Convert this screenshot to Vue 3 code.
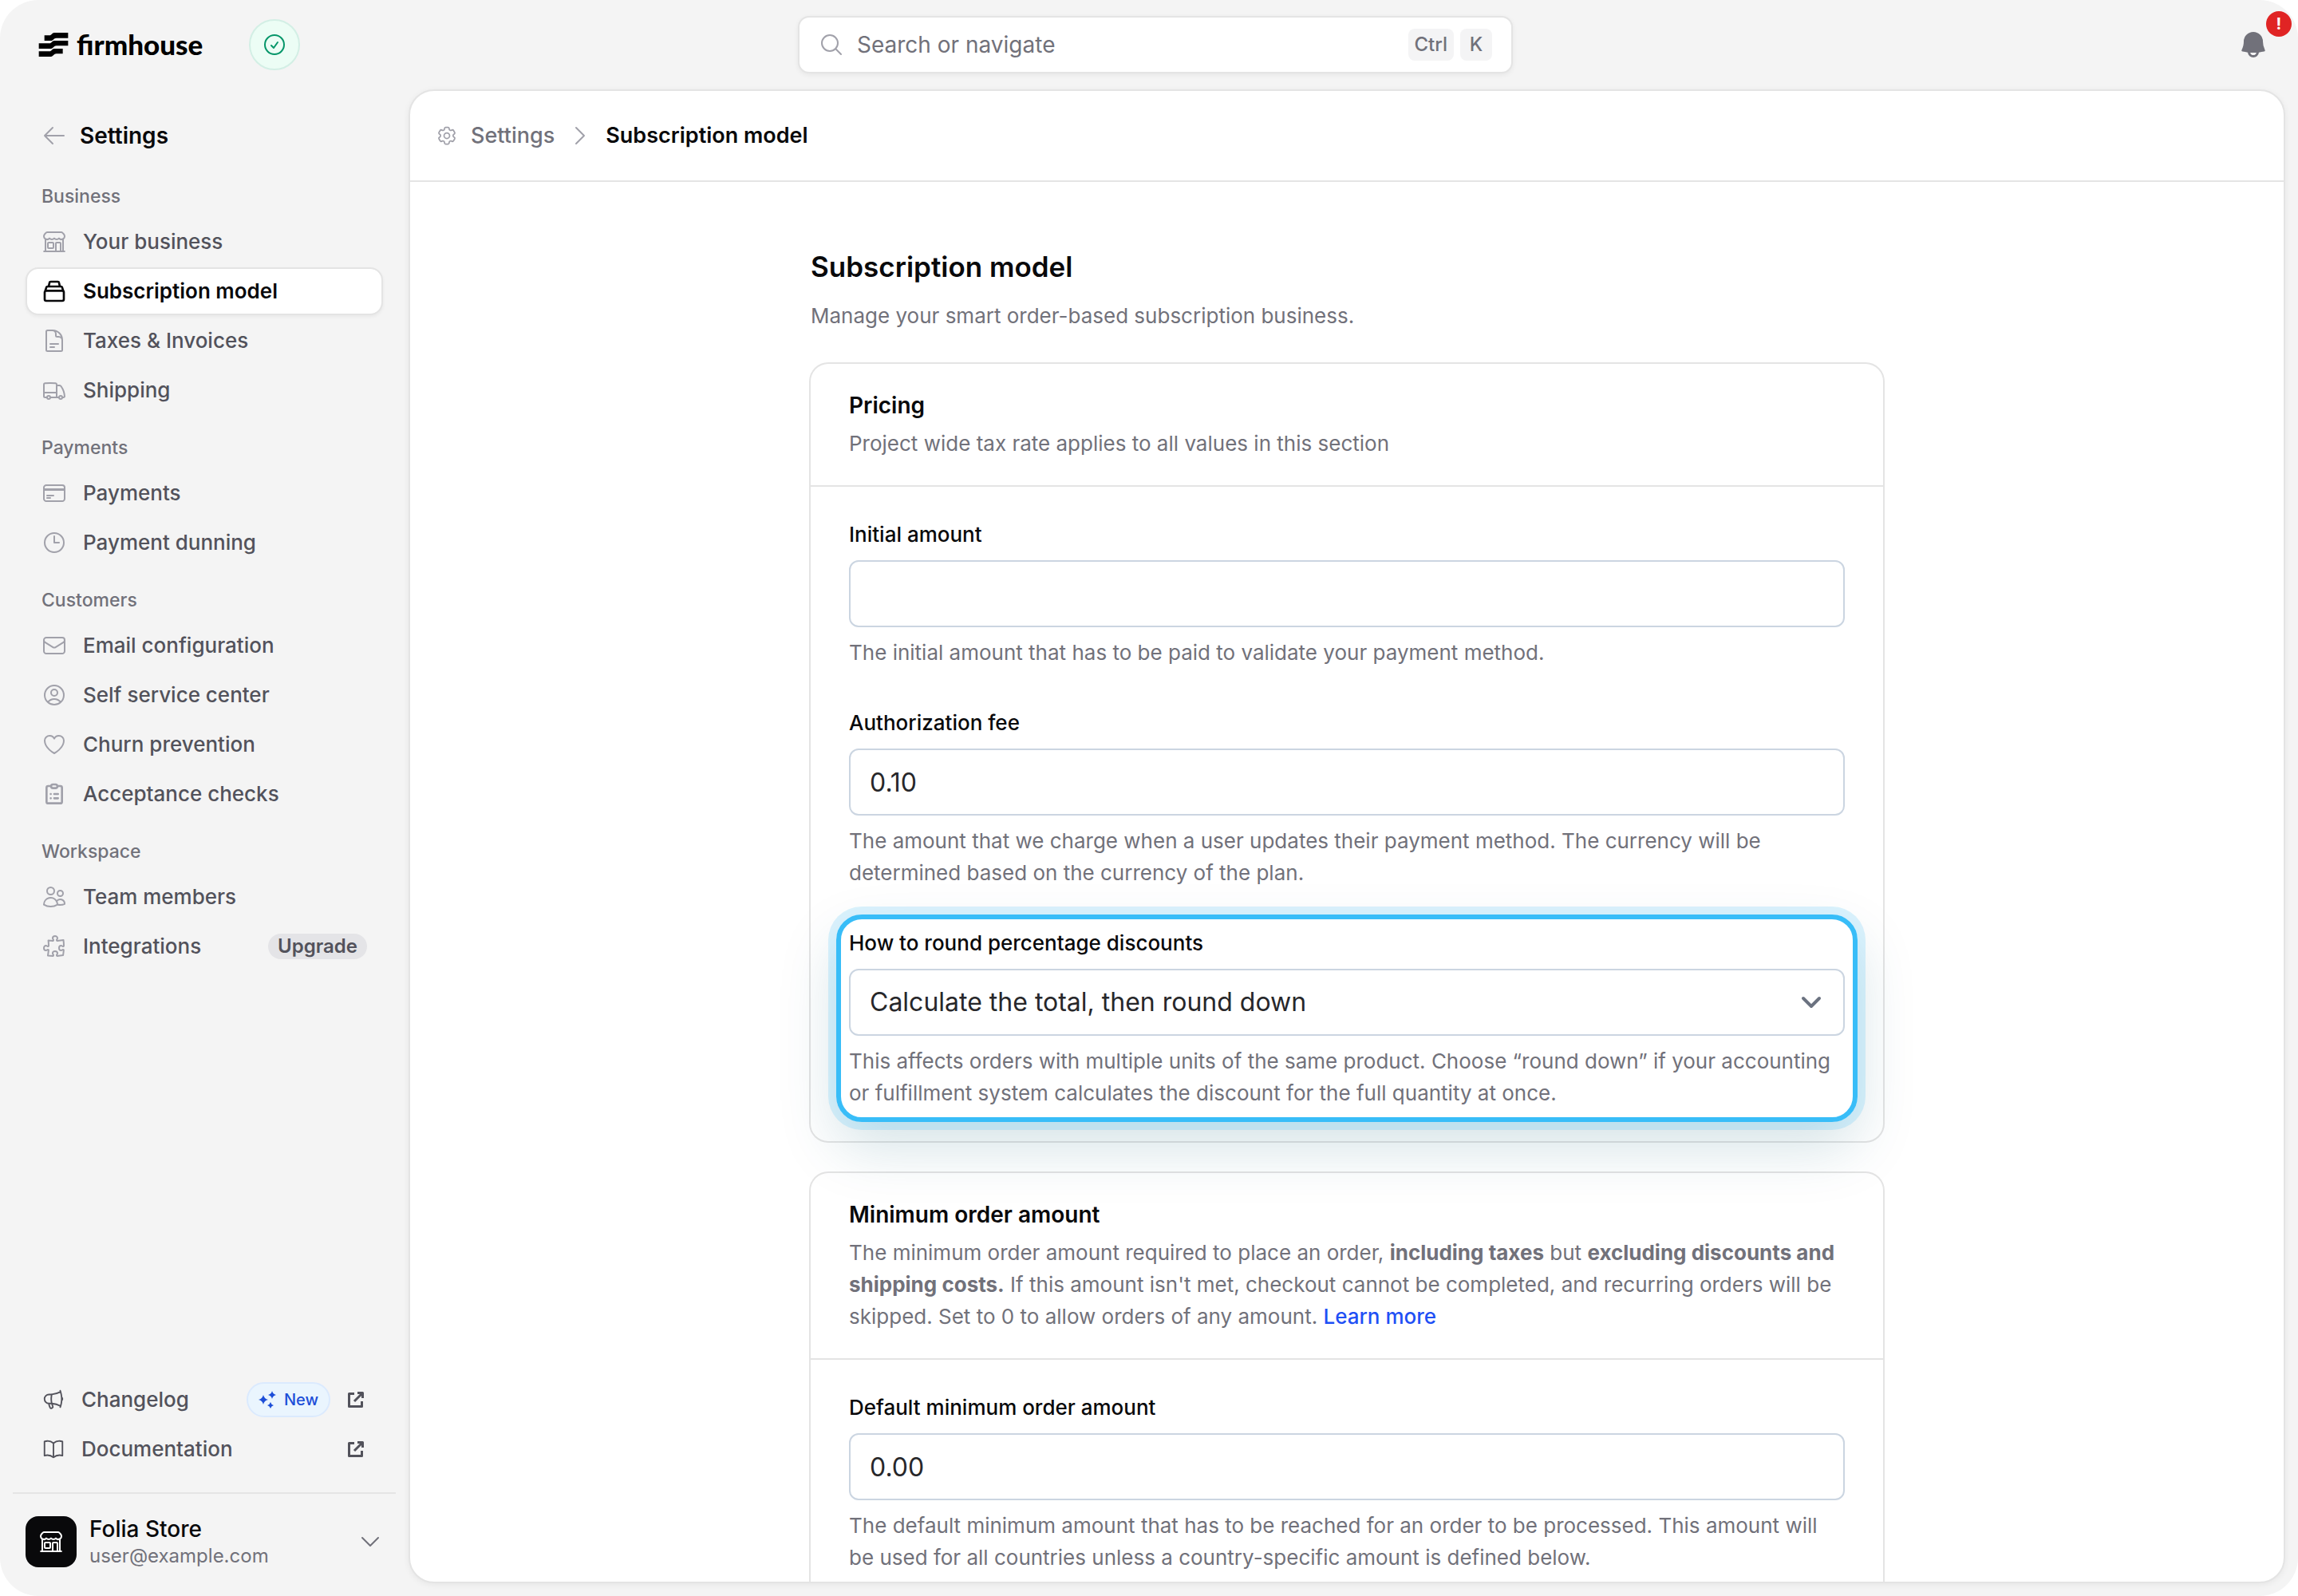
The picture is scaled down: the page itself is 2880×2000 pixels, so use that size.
<script setup>
import { h, ref } from 'vue';

// Outline icons, all drawn on a 24x24 grid
const icons = {
  store: 'M13.5 21v-7.5a.75.75 0 0 1 .75-.75h3a.75.75 0 0 1 .75.75V21m-4.5 0H2.36m11.14 0H18m0 0h3.64m-1.39 0V9.349M3.75 21V9.349m0 0a3.001 3.001 0 0 0 3.75-.615A2.993 2.993 0 0 0 9.75 9.75c.896 0 1.7-.393 2.25-1.016a2.993 2.993 0 0 0 2.25 1.016c.896 0 1.7-.393 2.25-1.015a3.001 3.001 0 0 0 3.75.614m-16.5 0a3.004 3.004 0 0 1-.621-4.72l1.189-1.19A1.5 1.5 0 0 1 5.378 3h13.243a1.5 1.5 0 0 1 1.06.44l1.19 1.189a3 3 0 0 1-.621 4.72M6.75 18h3.75a.75.75 0 0 0 .75-.75V13.5a.75.75 0 0 0-.75-.75H6.75a.75.75 0 0 0-.75.75v3.75c0 .414.336.75.75.75Z',
  stack: 'M4.5 11.5h15a1.5 1.5 0 0 1 1.5 1.5v6.5a1.5 1.5 0 0 1-1.5 1.5h-15A1.5 1.5 0 0 1 3 19.5V13a1.5 1.5 0 0 1 1.5-1.5ZM3.4 12l1.2-3.7a1.2 1.2 0 0 1 1.1-.8h12.6a1.2 1.2 0 0 1 1.1.8l1.2 3.7M6.8 7.3l.7-3.3a1.2 1.2 0 0 1 1.2-1h6.6a1.2 1.2 0 0 1 1.2 1l.7 3.3',
  document: 'M19.5 14.25v-2.625a3.375 3.375 0 0 0-3.375-3.375h-1.5A1.125 1.125 0 0 1 13.5 7.125v-1.5a3.375 3.375 0 0 0-3.375-3.375H8.25m0 12.75h7.5m-7.5 3H12M10.5 2.25H5.625c-.621 0-1.125.504-1.125 1.125v17.25c0 .621.504 1.125 1.125 1.125h12.75c.621 0 1.125-.504 1.125-1.125V11.25a9 9 0 0 0-9-9Z',
  truck: 'M8.25 18.75a1.5 1.5 0 0 1-3 0m3 0a1.5 1.5 0 0 0-3 0m3 0h6m-9 0H3.375a1.125 1.125 0 0 1-1.125-1.125V14.25m17.25 4.5a1.5 1.5 0 0 1-3 0m3 0a1.5 1.5 0 0 0-3 0m3 0h1.125c.621 0 1.129-.504 1.09-1.124a17.902 17.902 0 0 0-3.213-9.193 2.056 2.056 0 0 0-1.58-.86H14.25M16.5 18.75h-2.25m0-11.177v-.958c0-.568-.422-1.048-.987-1.106a48.554 48.554 0 0 0-10.026 0 1.106 1.106 0 0 0-.987 1.106v7.635m12-6.677v6.677m0 4.5v-4.5m0 0h-12',
  card: 'M2.25 8.25h19.5M2.25 9h19.5m-16.5 5.25h6m-6 2.25h3m-3.75 3h15a2.25 2.25 0 0 0 2.25-2.25V6.75A2.25 2.25 0 0 0 19.5 4.5h-15a2.25 2.25 0 0 0-2.25 2.25v10.5A2.25 2.25 0 0 0 4.5 19.5Z',
  clock: 'M12 6v6h4.5m4.5 0a9 9 0 1 1-18 0 9 9 0 0 1 18 0Z',
  envelope: 'M21.75 6.75v10.5a2.25 2.25 0 0 1-2.25 2.25h-15a2.25 2.25 0 0 1-2.25-2.25V6.75m19.5 0A2.25 2.25 0 0 0 19.5 4.5h-15a2.25 2.25 0 0 0-2.25 2.25m19.5 0v.243a2.25 2.25 0 0 1-1.07 1.916l-7.5 4.615a2.25 2.25 0 0 1-2.36 0L3.32 8.91a2.25 2.25 0 0 1-1.07-1.916V6.75',
  user: 'M17.982 18.725A7.488 7.488 0 0 0 12 15.75a7.488 7.488 0 0 0-5.982 2.975m11.963 0a9 9 0 1 0-11.963 0m11.963 0A8.966 8.966 0 0 1 12 21a8.966 8.966 0 0 1-5.982-2.275M15 9.75a3 3 0 1 1-6 0 3 3 0 0 1 6 0Z',
  heart: 'M21 8.25c0-2.485-2.099-4.5-4.688-4.5-1.935 0-3.597 1.126-4.312 2.733-.715-1.607-2.377-2.733-4.313-2.733C5.1 3.75 3 5.765 3 8.25c0 7.22 9 12 9 12s9-4.78 9-12Z',
  clipboard: 'M9 4.5H6.25a1.5 1.5 0 0 0-1.5 1.5v13.25a1.5 1.5 0 0 0 1.5 1.5h11.5a1.5 1.5 0 0 0 1.5-1.5V6a1.5 1.5 0 0 0-1.5-1.5H15M10.75 3h2.5A1.75 1.75 0 0 1 15 4.75 1.75 1.75 0 0 1 13.25 6.5h-2.5A1.75 1.75 0 0 1 9 4.75 1.75 1.75 0 0 1 10.75 3ZM8.7 12h.01M12 12h3.5M8.7 16h.01M12 16h3.5',
  users: 'M15 19.128a9.38 9.38 0 0 0 2.625.372 9.337 9.337 0 0 0 4.121-.952 4.125 4.125 0 0 0-7.533-2.493M15 19.128v-.003c0-1.113-.285-2.16-.786-3.07M15 19.128v.106A12.318 12.318 0 0 1 8.624 21c-2.331 0-4.512-.645-6.374-1.766l-.001-.109a6.375 6.375 0 0 1 11.964-3.07M12 6.375a3.375 3.375 0 1 1-6.75 0 3.375 3.375 0 0 1 6.75 0Zm8.25 2.25a2.625 2.625 0 1 1-5.25 0 2.625 2.625 0 0 1 5.25 0Z',
  puzzle: 'M14.25 6.087c0-.355.186-.676.401-.959.221-.29.349-.634.349-1.003 0-1.036-1.007-1.875-2.25-1.875s-2.25.84-2.25 1.875c0 .369.128.713.349 1.003.215.283.401.604.401.959v0a.64.64 0 0 1-.657.643 48.39 48.39 0 0 1-4.163-.3c.186 1.613.293 3.25.315 4.907a.656.656 0 0 1-.658.663v0c-.355 0-.676-.186-.959-.401a1.647 1.647 0 0 0-1.003-.349c-1.036 0-1.875 1.007-1.875 2.25s.84 2.25 1.875 2.25c.369 0 .713-.128 1.003-.349.283-.215.604-.401.959-.401v0c.31 0 .555.26.532.57a48.039 48.039 0 0 1-.642 5.056c1.518.19 3.058.309 4.616.354a.64.64 0 0 0 .657-.643v0c0-.355-.186-.676-.401-.959a1.647 1.647 0 0 1-.349-1.003c0-1.035 1.008-1.875 2.25-1.875 1.243 0 2.25.84 2.25 1.875 0 .369-.128.713-.349 1.003-.215.283-.4.604-.4.959v0c0 .333.277.599.61.58a48.1 48.1 0 0 0 5.427-.63 48.05 48.05 0 0 0 .582-4.717.532.532 0 0 0-.533-.57v0c-.355 0-.676.186-.959.401-.29.221-.634.349-1.003.349-1.035 0-1.875-1.007-1.875-2.25s.84-2.25 1.875-2.25c.37 0 .713.128 1.003.349.283.215.604.401.96.401v0a.656.656 0 0 0 .658-.663 48.422 48.422 0 0 0-.37-5.36c-1.886.342-3.81.574-5.766.689a.578.578 0 0 1-.61-.58v0Z',
  megaphone: 'M10.34 15.84c-.688-.06-1.386-.09-2.09-.09H7.5a4.5 4.5 0 1 1 0-9h.75c.704 0 1.402-.03 2.09-.09m0 9.18c.253.962.584 1.892.985 2.783.247.55.06 1.21-.463 1.511l-.657.38c-.551.318-1.26.117-1.527-.461a20.845 20.845 0 0 1-1.44-4.282m3.102.069a18.03 18.03 0 0 1-.59-4.59c0-1.586.205-3.124.59-4.59m0 9.18a23.848 23.848 0 0 1 8.835 2.535M10.34 6.66a23.847 23.847 0 0 0 8.835-2.535m0 0A23.74 23.74 0 0 0 18.795 3m.38 1.125a23.91 23.91 0 0 1 1.014 5.395m-1.014 8.855c-.118.38-.245.754-.38 1.125m.38-1.125a23.91 23.91 0 0 0 1.014-5.395m0-3.46c.495.413.811 1.035.811 1.73 0 .695-.316 1.317-.811 1.73m0-3.46a24.347 24.347 0 0 1 0 3.46',
  book: 'M12 6.042A8.967 8.967 0 0 0 6 3.75c-1.052 0-2.062.18-3 .512v14.25A8.987 8.987 0 0 1 6 18c2.305 0 4.408.867 6 2.292m0-14.25a8.966 8.966 0 0 1 6-2.292c1.052 0 2.062.18 3 .512v14.25A8.987 8.987 0 0 0 18 18a8.967 8.967 0 0 0-6 2.292m0-14.25v14.25',
  external: 'M10 4.500H3.500V20.500H19.500V14M14 3.500h6.500V10M20 4 10 14',
  cog: 'M9.594 3.94c.09-.542.56-.94 1.11-.94h2.593c.55 0 1.02.398 1.11.94l.213 1.281c.063.374.313.686.645.87.074.04.147.083.22.127.325.196.72.257 1.075.124l1.217-.456a1.125 1.125 0 0 1 1.37.49l1.296 2.247a1.125 1.125 0 0 1-.26 1.431l-1.003.827c-.293.241-.438.613-.43.992a7.723 7.723 0 0 1 0 .255c-.008.378.137.75.43.991l1.004.827c.424.35.534.955.26 1.43l-1.298 2.247a1.125 1.125 0 0 1-1.369.491l-1.217-.456c-.355-.133-.75-.072-1.076.124a6.47 6.47 0 0 1-.22.128c-.331.183-.581.495-.644.869l-.213 1.281c-.09.543-.56.94-1.11.94h-2.594c-.55 0-1.019-.398-1.11-.94l-.213-1.281c-.062-.374-.312-.686-.644-.87a6.52 6.52 0 0 1-.22-.127c-.325-.196-.72-.257-1.076-.124l-1.217.456a1.125 1.125 0 0 1-1.369-.49l-1.297-2.247a1.125 1.125 0 0 1 .26-1.431l1.004-.827c.292-.24.437-.613.43-.991a6.932 6.932 0 0 1 0-.255c.007-.38-.138-.751-.43-.992l-1.004-.827a1.125 1.125 0 0 1-.26-1.43l1.297-2.247a1.125 1.125 0 0 1 1.37-.491l1.216.456c.356.133.751.072 1.076-.124.072-.044.146-.086.22-.128.332-.183.582-.495.644-.869l.214-1.28ZM15 12a3 3 0 1 1-6 0 3 3 0 0 1 6 0Z',
  arrowLeft: 'M10.5 19.5 3 12m0 0 7.5-7.5M3 12h18',
  chevronRight: 'm8.250 4.500 7.500 7.500-7.500 7.500',
  chevronDown: 'm19.500 8.250-7.500 7.500-7.500-7.500',
  search: 'm21 21-5.197-5.197m0 0A7.5 7.5 0 1 0 5.196 5.196a7.5 7.5 0 0 0 10.607 10.607Z',
  check: 'M9 12.75 11.25 15 15 9.75M21 12a9 9 0 1 1-18 0 9 9 0 0 1 18 0Z',
};

const Icon = (props) =>
  h('svg', { class: 'icon', viewBox: '0 0 24 24', 'aria-hidden': 'true' }, [
    h('path', { d: icons[props.name] }),
  ]);
Icon.props = ['name'];

const groups = [
  {
    title: 'Business',
    items: [
      { label: 'Your business', icon: 'store' },
      { label: 'Subscription model', icon: 'stack', active: true },
      { label: 'Taxes & Invoices', icon: 'document' },
      { label: 'Shipping', icon: 'truck' },
    ],
  },
  {
    title: 'Payments',
    items: [
      { label: 'Payments', icon: 'card' },
      { label: 'Payment dunning', icon: 'clock' },
    ],
  },
  {
    title: 'Customers',
    items: [
      { label: 'Email configuration', icon: 'envelope' },
      { label: 'Self service center', icon: 'user' },
      { label: 'Churn prevention', icon: 'heart' },
      { label: 'Acceptance checks', icon: 'clipboard', bold: true },
    ],
  },
  {
    title: 'Workspace',
    items: [
      { label: 'Team members', icon: 'users' },
      { label: 'Integrations', icon: 'puzzle', badge: 'Upgrade' },
    ],
  },
];

const query = ref('');
const initialAmount = ref('');
const authorizationFee = ref('0.10');
const rounding = ref('total-down');
const minimumAmount = ref('0.00');
</script>

<template>
  <div class="shell">
    <header class="topbar">
      <div class="brand">
        <a href="#" class="logo">
          <svg class="logoMark" viewBox="0 0 110 90" aria-hidden="true">
            <path d="M21 10H40C48 10 50 0 58 0H110V20H66C56 20 54 30 46 30H21Z" />
            <path d="M0 40H40C48 40 50 30 58 30H110V49H66C56 49 54 60 46 60H0Z" />
            <path d="M0 70H40C48 70 50 60 58 60H90V79H66C56 79 54 90 46 90H0Z" />
          </svg>
          <span class="logoText">firmhouse</span>
        </a>
        <button type="button" class="status" aria-label="Status">
          <Icon name="check" />
        </button>
      </div>

      <label class="search">
        <Icon name="search" />
        <input v-model="query" type="text" placeholder="Search or navigate" aria-label="Search or navigate" />
        <span class="keys"><kbd>Ctrl</kbd><kbd>K</kbd></span>
      </label>

      <button type="button" class="bell" aria-label="Notifications">
        <svg viewBox="0 0 20 20" aria-hidden="true">
          <path fill-rule="evenodd" d="M10 2a6 6 0 0 0-6 6c0 1.887-.454 3.665-1.257 5.234a.75.75 0 0 0 .515 1.076 32.91 32.91 0 0 0 3.256.508 3.5 3.5 0 0 0 6.972 0 32.903 32.903 0 0 0 3.256-.508.75.75 0 0 0 .515-1.076A11.448 11.448 0 0 1 16 8a6 6 0 0 0-6-6ZM8.050 14.943a33.540 33.540 0 0 0 3.900 0 2 2 0 0 1-3.900 0Z" />
        </svg>
        <span class="bellBadge">!</span>
      </button>
    </header>

    <aside class="sidebar">
      <a href="#" class="back">
        <Icon name="arrowLeft" />
        <span>Settings</span>
      </a>

      <nav class="nav">
        <section v-for="group in groups" :key="group.title">
          <h2 class="navTitle">{{ group.title }}</h2>
          <ul class="navList">
            <li v-for="item in group.items" :key="item.label">
              <a href="#" class="navItem" :class="{ active: item.active, bold: item.bold }">
                <Icon :name="item.icon" />
                <span>{{ item.label }}</span>
                <span v-if="item.badge" class="upgrade">{{ item.badge }}</span>
              </a>
            </li>
          </ul>
        </section>
      </nav>

      <div class="links">
        <a href="#" class="linkItem">
          <Icon name="megaphone" />
          <span>Changelog</span>
          <span class="new">
            <svg viewBox="0 0 22 22" aria-hidden="true">
              <path d="M6 5q1.200 4.800 6 6-4.800 1.200-6 6-1.200-4.800-6-6 4.800-1.200 6-6Z" />
              <path d="M17 0q.9 4 5 5-4.100 1-5 5-.9-4-5-5 4.100-1 5-5Z" />
              <path d="M15 14q.8 3.200 4 4-3.200.8-4 4-.8-3.200-4-4 3.200-.8 4-4Z" />
            </svg>
            New
          </span>
          <Icon name="external" class="external" />
        </a>
        <a href="#" class="linkItem">
          <Icon name="book" />
          <span>Documentation</span>
          <Icon name="external" class="external" />
        </a>
      </div>

      <button type="button" class="account">
        <span class="avatar"><Icon name="store" /></span>
        <span class="accountText">
          <span class="accountName">Folia Store</span>
          <span class="accountMail">user@example.com</span>
        </span>
        <Icon name="chevronDown" />
      </button>
    </aside>

    <main class="panel">
      <nav class="crumbs" aria-label="Breadcrumb">
        <Icon name="cog" class="crumbCog" />
        <a href="#">Settings</a>
        <Icon name="chevronRight" />
        <span class="crumbCurrent">Subscription model</span>
      </nav>

      <div class="scroll">
        <div class="content">
          <h1>Subscription model</h1>
          <p class="intro">Manage your smart order-based subscription business.</p>

          <section class="card">
            <div class="cardHeader">
              <h3>Pricing</h3>
              <p>Project wide tax rate applies to all values in this section</p>
            </div>
            <div class="cardBody">
              <div class="field">
                <label for="initial-amount">Initial amount</label>
                <input id="initial-amount" v-model="initialAmount" type="text" />
                <p>The initial amount that has to be paid to validate your payment method.</p>
              </div>
              <div class="field">
                <label for="authorization-fee">Authorization fee</label>
                <input id="authorization-fee" v-model="authorizationFee" type="text" />
                <p>The amount that we charge when a user updates their payment method. The currency will be determined based on the currency of the plan.</p>
              </div>
              <div class="field highlight">
                <label for="rounding">How to round percentage discounts</label>
                <div class="select">
                  <select id="rounding" v-model="rounding">
                    <option value="total-down">Calculate the total, then round down</option>
                  </select>
                  <Icon name="chevronDown" />
                </div>
                <p>This affects orders with multiple units of the same product. Choose “round down” if your accounting or fulfillment system calculates the discount for the full quantity at once.</p>
              </div>
            </div>
          </section>

          <section class="card">
            <div class="cardHeader">
              <h3>Minimum order amount</h3>
              <p>
                The minimum order amount required to place an order, <strong>including taxes</strong> but
                <strong>excluding discounts and shipping costs.</strong> If this amount isn't met, checkout cannot be
                completed, and recurring orders will be skipped. Set to 0 to allow orders of any amount.
                <a href="#">Learn more</a>
              </p>
            </div>
            <div class="cardBody">
              <div class="field">
                <label for="minimum-amount">Default minimum order amount</label>
                <input id="minimum-amount" v-model="minimumAmount" type="text" />
                <p>The default minimum amount that has to be reached for an order to be processed. This amount will be used for all countries unless a country-specific amount is defined below.</p>
              </div>
            </div>
          </section>
        </div>
      </div>
    </main>
  </div>
</template>

<style>
html,
body {
  margin: 0;
  background: #fff;
}
</style>

<style scoped>
.shell,
.shell * {
  box-sizing: border-box;
}

.shell {
  display: grid;
  grid-template-columns: 512px minmax(0, 1fr);
  grid-template-rows: 112px minmax(0, 1fr);
  height: 100vh;
  padding-right: 16px;
  border-radius: 48px;
  background: #f4f4f4;
  color: #09090b;
  font-family: Inter, "Liberation Sans", sans-serif;
  font-size: 26px;
  line-height: 40px;
}

h1,
h2,
h3,
p,
ul {
  margin: 0;
  padding: 0;
}

a {
  color: inherit;
  text-decoration: none;
}

button,
input,
select {
  margin: 0;
  font-family: inherit;
  outline: none;
}

.icon {
  flex: none;
  width: 32px;
  height: 32px;
  fill: none;
  stroke: currentColor;
  stroke-width: 1.5;
  stroke-linecap: round;
  stroke-linejoin: round;
}

/* Top bar */
.topbar {
  grid-column: 1 / -1;
  display: grid;
  grid-template-columns: 1fr 896px 1fr;
  align-items: center;
  padding-left: 32px;
}

.brand {
  display: flex;
  align-items: center;
  gap: 56px;
  padding-left: 16px;
}

.logo {
  display: flex;
  align-items: center;
  gap: 10px;
  width: 208px;
  color: #000;
}

.logoMark {
  flex: none;
  width: 38px;
  height: 30px;
}

.logoText {
  padding-bottom: 2px;
  font-family: Lato, sans-serif;
  font-size: 35px;
  font-weight: 900;
}

.status {
  display: grid;
  place-items: center;
  width: 64px;
  height: 64px;
  padding: 0;
  border: 2px solid #d3efe5;
  border-radius: 50%;
  background: #ecfdf5;
  color: #059669;
}

.search {
  display: flex;
  align-items: center;
  height: 72px;
  padding: 0 24px;
  border: 2px solid #e4e4e4;
  border-radius: 14px;
  background: #fff;
  color: #a1a1aa;
  box-shadow: 0 2px 6px rgba(0, 0, 0, 0.06);
}

.search input {
  flex: 1;
  min-width: 0;
  padding: 0 16px;
  border: 0;
  background: none;
  color: #27272a;
  font-size: 28px;
  line-height: 40px;
}

.search input::placeholder {
  color: #71717a;
  opacity: 1;
}

.keys {
  display: flex;
  gap: 8px;
}

kbd {
  min-width: 40px;
  padding: 0 8px;
  border-radius: 8px;
  background: #f4f4f5;
  color: #71717a;
  font-family: inherit;
  font-size: 24px;
  font-weight: 500;
  text-align: center;
}

.bell {
  position: relative;
  justify-self: end;
  display: grid;
  place-items: center;
  width: 80px;
  height: 80px;
  padding: 0;
  border: 0;
  background: none;
  color: #71717a;
}

.bell svg {
  width: 40px;
  height: 40px;
  fill: currentColor;
}

.bellBadge {
  position: absolute;
  top: -2px;
  right: -8px;
  width: 32px;
  height: 32px;
  border-radius: 50%;
  background: #e02424;
  color: #fff;
  font-size: 20px;
  font-weight: 700;
  line-height: 32px;
  text-align: center;
}

/* Sidebar */
.sidebar {
  display: flex;
  flex-direction: column;
  min-height: 0;
  padding: 28px 16px 0;
}

.back {
  display: flex;
  align-items: center;
  gap: 16px;
  height: 60px;
  margin: 0 16px 26px;
  padding-left: 20px;
  font-size: 28px;
  font-weight: 600;
}

.back .icon {
  color: #a1a1aa;
}

.nav {
  display: flex;
  flex: 1;
  flex-direction: column;
  gap: 22px;
  padding: 0 16px;
}

.navTitle {
  margin-bottom: 7px;
  padding-left: 20px;
  color: #71717a;
  font-size: 23px;
  font-weight: 500;
}

.navList {
  display: flex;
  flex-direction: column;
  gap: 2px;
  list-style: none;
}

.navItem {
  display: flex;
  align-items: center;
  gap: 20px;
  height: 60px;
  padding: 0 18px;
  border: 2px solid transparent;
  border-radius: 16px;
  color: #52525b;
  font-weight: 500;
}

.navItem .icon {
  color: #a1a1aa;
}

.navItem.active {
  border-color: #e4e4e4;
  background: #fff;
  background-clip: padding-box;
  color: #09090b;
  font-weight: 600;
  box-shadow: 0 2px 4px rgba(0, 0, 0, 0.05);
}

.navItem.active .icon {
  color: #09090b;
}

.navItem.bold .icon,
.navItem.active .icon {
  stroke-width: 2;
}

.upgrade {
  margin-left: auto;
  padding: 0 12px;
  border-radius: 16px;
  background: #e4e4e7;
  font-size: 24px;
  font-weight: 600;
  line-height: 32px;
}

.links {
  display: flex;
  flex-direction: column;
  gap: 2px;
  padding: 0 38px 24px 36px;
  border-bottom: 2px solid #e4e4e4;
}

.linkItem {
  display: flex;
  align-items: center;
  gap: 20px;
  height: 60px;
  color: #52525b;
  font-weight: 500;
}

.linkItem .icon {
  width: 30px;
  height: 30px;
}

.linkItem .external {
  width: 24px;
  height: 24px;
  margin-left: auto;
  stroke-width: 3;
  stroke-linecap: butt;
}

.new {
  display: flex;
  align-items: center;
  gap: 10px;
  height: 44px;
  margin-left: auto;
  padding: 0 13px;
  border: 2px solid #dbeafe;
  border-radius: 22px;
  background: #eaf5fe;
  color: #1d4ed8;
  font-size: 20px;
}

.new svg {
  width: 22px;
  height: 22px;
  fill: #1d4ed8;
}

.new + .external {
  margin-left: 0;
}

.account {
  display: flex;
  align-items: center;
  gap: 16px;
  padding: 28px 16px 36px;
  border: 0;
  background: none;
  color: #71717a;
  text-align: left;
}

.avatar {
  display: grid;
  place-items: center;
  width: 64px;
  height: 64px;
  border-radius: 16px;
  background: #09090b;
  color: #fff;
}

.accountText {
  display: flex;
  flex: 1;
  flex-direction: column;
  margin: -2px 0;
}

.accountName {
  color: #09090b;
  font-size: 28px;
  font-weight: 500;
  line-height: 36px;
}

.accountMail {
  font-size: 24px;
  line-height: 32px;
}

/* Main panel */
.panel {
  display: flex;
  flex-direction: column;
  min-width: 0;
  margin-bottom: 16px;
  overflow: hidden;
  border: 2px solid #e4e4e4;
  border-radius: 32px;
  background: #fff;
  box-shadow: 0 2px 8px rgba(0, 0, 0, 0.06);
}

.crumbs {
  display: flex;
  flex: none;
  align-items: center;
  gap: 16px;
  height: 114px;
  padding: 0 32px;
  border-bottom: 2px solid #e4e4e4;
  color: #71717a;
  font-size: 27px;
  font-weight: 500;
}

.crumbs .icon {
  color: #a1a1aa;
}

.crumbs .crumbCog {
  width: 28px;
  height: 28px;
}

.crumbCurrent {
  color: #09090b;
  font-weight: 600;
}

.scroll {
  flex: 1;
  min-height: 0;
  overflow-y: auto;
  scrollbar-width: none;
}

.content {
  max-width: 1344px;
  margin: 0 auto;
  padding: 80px 0;
}

h1 {
  font-size: 35px;
  font-weight: 600;
  line-height: 52px;
}

.intro {
  margin: 16px 0 40px;
  color: #71717a;
}

/* The frame sits outside the box so the text column keeps its width */
.card {
  border-radius: 22px;
  box-shadow: 0 0 0 2px #e4e4e4;
}

.card + .card {
  margin-top: 40px;
}

.cardHeader {
  padding: 32px 48px;
  border-bottom: 2px solid #e4e4e4;
}

.cardHeader h3 {
  margin-bottom: 8px;
  font-size: 28px;
  font-weight: 600;
}

.cardHeader p {
  color: #71717a;
}

.cardHeader strong {
  font-weight: 700;
}

.cardHeader a {
  color: #1f50f5;
  font-weight: 500;
}

.cardBody {
  display: flex;
  flex-direction: column;
  gap: 48px;
  padding: 40px 48px;
}

.field {
  display: flex;
  flex-direction: column;
  gap: 12px;
}

.field label {
  font-weight: 500;
}

.field p {
  color: #71717a;
}

.field input,
.field select {
  width: 100%;
  height: 84px;
  padding: 0 24px;
  border: 2px solid #cbd5e1;
  border-radius: 12px;
  background: #fff;
  color: #27272a;
  font-size: 32px;
  line-height: 48px;
}

.field select {
  appearance: none;
}

.select {
  position: relative;
  display: flex;
  align-items: center;
}

.select .icon {
  position: absolute;
  right: 26px;
  color: #6b7280;
  stroke-width: 3;
  pointer-events: none;
}

/* Spotlight around the rounding setting */
.highlight {
  position: relative;
}

.highlight::after {
  content: "";
  position: absolute;
  inset: -16px;
  border: 6px solid #38bdf8;
  border-radius: 32px;
  box-shadow:
    0 0 0 10px rgba(56, 189, 248, 0.18),
    0 32px 72px rgba(8, 90, 114, 0.17);
  pointer-events: none;
}
</style>
